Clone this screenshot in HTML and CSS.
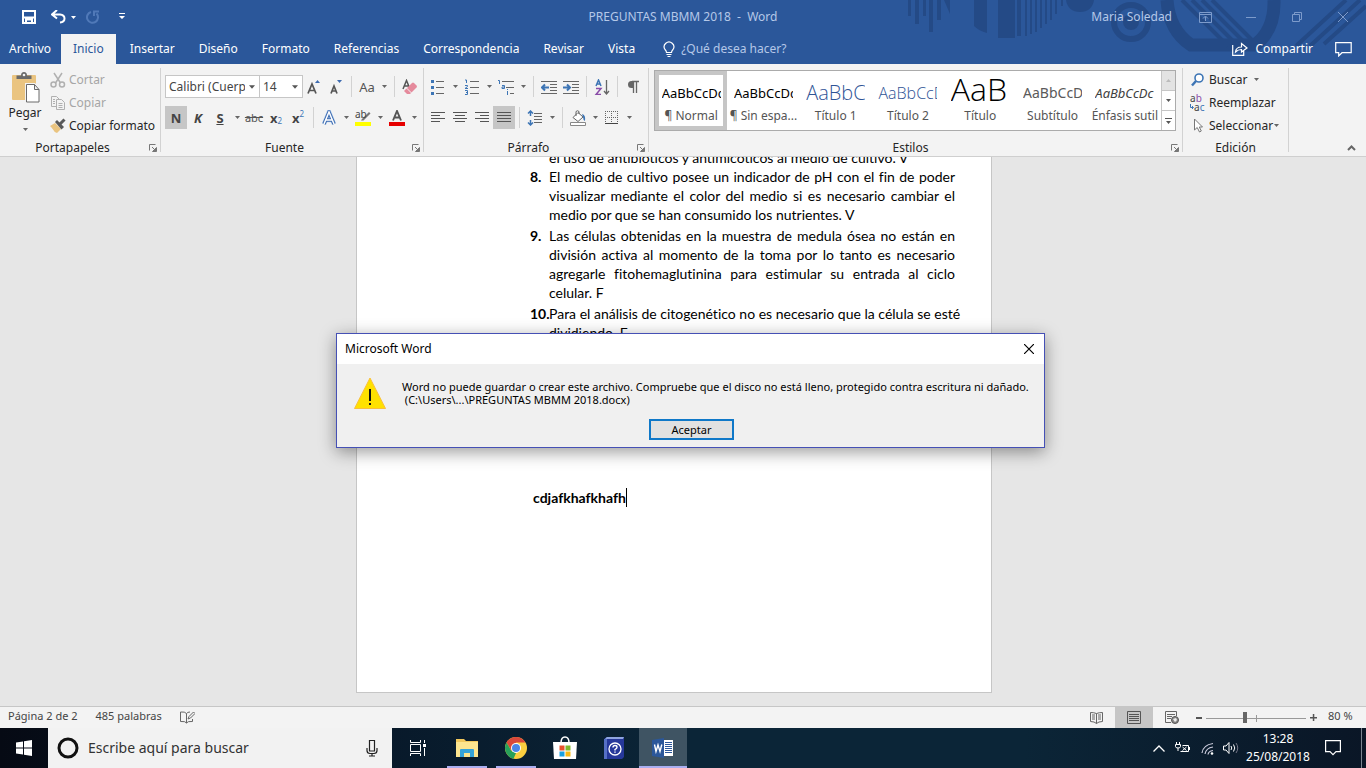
FILE: index.html
```html
<!DOCTYPE html>
<html lang="es">
<head>
<meta charset="utf-8">
<title>PREGUNTAS MBMM 2018 - Word</title>
<link rel="stylesheet" href="styles.css">
</head>
<body>
<svg class="defs" aria-hidden="true">
  <symbol id="down" viewBox="0 0 7 4"><path d="M0 0h7L3.500 4z" fill="currentColor"/></symbol>
  <symbol id="launch" viewBox="0 0 8 8"><path d="M.5 6.500v-6h6M3 3l3 3M7.500 3.500v4h-4z" fill="none" stroke="#777"/><path d="M7.500 3.500v4h-4z" fill="#777"/></symbol>
</svg>

<header class="top">
  <svg class="pattern" viewBox="0 0 460 64" aria-hidden="true">
    <g fill="#244a86">
      <path d="M2 0h3v16H2zM9 0h4v24H9zM17 0h3v16h-3zM23 0h4v32h-4zM31 0h4v20h-4zM38 0h6v14zM68 0h13v33q-8-2-13-7zM92 0h17v38H92z"/>
      <path d="M111 0h4v36h-4zM119 0h2v36h-2zM124 0h2v34h-2zM129 0h2v32h-2zM134 0h2v28h-2zM139 0h2v24h-2zM144 0h2v20h-2zM149 0h2v14h-2zM155 0h2v6h-2z"/>
      <path d="M160 0h28q-2 12-14 12t-14-12z"/>
      <circle cx="225" cy="22" r="8"/>
    </g>
    <g fill="none" stroke="#244a86">
      <circle cx="225" cy="22" r="17" stroke-width="6"/>
      <path d="M261 0q2 30 24 45h64q20-15 19-45" stroke-width="13"/>
      <path d="M276 0l46 46M286 0l46 46M296 0l46 46M306 0l46 46" stroke-width="4"/>
      <path d="M440 0l-50 46M454 0l-50 46M460 6l-42 38" stroke-width="4"/>
    </g>
  </svg>
  <div class="titlebar">
    <div class="quick">
      <button class="qb save" aria-label="Guardar"><svg width="14" height="14" viewBox="0 0 14 14"><path d="M1 1h12v12H1zM1 7.500h12M4 13V9.500h6V13" fill="none" stroke="#fff" stroke-width="2"/></svg></button>
      <button class="qb undo" aria-label="Deshacer"><svg width="15" height="14" viewBox="0 0 15 14"><path d="M6 0L1 4.500l5 4M2 4.500h7q4.500.5 4.500 4T9 12.500" fill="none" stroke="#fff" stroke-width="2"/></svg></button>
      <button class="qb tiny" aria-label="Opciones de deshacer"><svg width="5" height="3"><use href="#down"/></svg></button>
      <button class="qb redo" aria-label="Rehacer"><svg width="14" height="14" viewBox="0 0 14 14"><path d="M5 2a5.500 5.500 0 1 0 5.500 1.500M8 6V1.500h5" fill="none" stroke="#5079b8" stroke-width="2"/></svg></button>
      <button class="qb more" aria-label="Personalizar"><svg width="6" height="8" viewBox="0 0 6 8"><path d="M0 0h6v1H0zM0 3h6L3 6z" fill="#fff"/></svg></button>
    </div>
    <div class="doc-title">PREGUNTAS MBMM 2018&nbsp; -&nbsp; Word</div>
    <div class="window">
      <span class="user">Maria Soledad</span>
      <button aria-label="Opciones de cinta"><svg width="13" height="11" viewBox="0 0 13 11"><path d="M.5.5h12v10H.5zM.5 2.500h12M6.500 9V4.500M4 6.500l2.500-2.500L9 6.500" fill="none" stroke="#7d9bcb"/></svg></button>
      <button aria-label="Minimizar"><svg width="10" height="10" viewBox="0 0 10 10"><path d="M0 5.500h10" stroke="#7d9bcb"/></svg></button>
      <button aria-label="Restaurar"><svg width="10" height="10" viewBox="0 0 10 10"><path d="M.5 2.500h7v7h-7zM2.500 2.500v-2h7v7h-2" fill="none" stroke="#7d9bcb"/></svg></button>
      <button aria-label="Cerrar"><svg width="10" height="10" viewBox="0 0 10 10"><path d="M0 0l10 10M10 0L0 10" stroke="#7d9bcb"/></svg></button>
    </div>
  </div>
  <nav class="tabs">
    <button class="tab file">Archivo</button>
    <button class="tab active">Inicio</button>
    <button class="tab first">Insertar</button>
    <button class="tab">Diseño</button>
    <button class="tab">Formato</button>
    <button class="tab">Referencias</button>
    <button class="tab">Correspondencia</button>
    <button class="tab">Revisar</button>
    <button class="tab">Vista</button>
    <label class="tell">
      <svg width="12" height="17" viewBox="0 0 12 17"><path d="M3.500 11.500Q3.500 10 2 8.500A4.800 4.800 0 1 1 10 8.500Q8.500 10 8.500 11.500zM3.500 13.500h5M4.500 15.500h3" fill="none" stroke="#fff" stroke-width="1.200"/></svg>
      <input type="text" placeholder="¿Qué desea hacer?" aria-label="¿Qué desea hacer?">
    </label>
    <button class="share"><svg width="16" height="14" viewBox="0 0 16 14"><path d="M.7 3v10.300h11V9M3.500 10Q4 5 9.500 5V1.500L15 6l-5.500 4V7.500Q6 7.500 3.500 10z" fill="none" stroke="#fff" stroke-width="1.200"/></svg>Compartir</button>
    <button class="comment" aria-label="Comentarios"><svg width="17" height="15" viewBox="0 0 17 15"><path d="M.7.7h15.500v10H7l-3.300 3.200v-3.200h-3z" fill="none" stroke="#fff" stroke-width="1.200"/></svg></button>
  </nav>
</header>

<section class="ribbon">
  <div class="group clipboard">
    <div class="body">
      <button class="paste">
        <svg width="29" height="31" viewBox="0 0 29 31"><path d="M1 4q0-1 1-1h22q1 0 1 1v24H2q-1 0-1-1z" fill="#eac480"/><path d="M5.500 7V3.500H10Q10 0 13 0t3 3.500h4.500V7z" fill="#6a6a6a"/><circle cx="13" cy="3" r="1.300" fill="#f3f3f3"/><path d="M14 11h10l5 5v15H14z" fill="#f3f3f3"/><path d="M15.500 12.500h8l4.500 5V30H15.500zM23.500 12.500v5H28" fill="#fff" stroke="#6a6a6a"/></svg>
        <span>Pegar</span>
        <svg class="dn" width="5" height="3"><use href="#down"/></svg>
      </button>
      <div class="stack">
        <button class="line off"><svg width="16" height="16" viewBox="0 0 16 16"><g fill="none" stroke="#b0b0b0" stroke-width="1.500"><path d="M4 1l6.500 10M12 1L5.500 11"/><circle cx="3.500" cy="12.500" r="2.500"/><circle cx="12" cy="12.500" r="2.500"/></g></svg>Cortar</button>
        <button class="line off"><svg width="16" height="16" viewBox="0 0 16 16"><path d="M6 11.500H1.500v-10h5L9 4M3 4.500h2M3 6.500h2M3 8.500h2M6.500 4.500h5l3 3v7h-8zM8.500 8.500h4M8.500 10.500h4M8.500 12.500h4" fill="none" stroke="#b0b0b0"/></svg>Copiar</button>
        <button class="line"><svg width="16" height="16" viewBox="0 0 16 16"><path d="M0 8l5-3 6 6-4 4q-3-1-4-3.500Q1.500 9 0 8z" fill="#eac480"/><path d="M5 4l2-2 7 7-2.500 2.500z" fill="#595959"/><path d="M10 6l4.500-4.500" stroke="#595959" stroke-width="3"/></svg>Copiar formato</button>
      </div>
    </div>
    <div class="caption"><span>Portapapeles</span><button aria-label="Más de Portapapeles"><svg width="8" height="8"><use href="#launch"/></svg></button></div>
  </div>

  <div class="group font">
    <div class="rows">
      <div class="row">
        <label class="combo face"><select aria-label="Fuente"><option>Calibri (Cuerpo)</option></select><svg width="6" height="4"><use href="#down"/></svg></label>
        <label class="combo size"><select aria-label="Tamaño"><option>14</option></select><svg width="6" height="4"><use href="#down"/></svg></label>
        <button class="tb" aria-label="Aumentar fuente"><svg width="16" height="16" viewBox="0 0 16 16"><path d="M2 14.500L6 5l4 9.500M3.500 11.500h5" fill="none" stroke="#555" stroke-width="1.700"/><path d="M9 4h5l-2.500-3z" fill="#3d6bb0"/></svg></button>
        <button class="tb" aria-label="Disminuir fuente"><svg width="16" height="16" viewBox="0 0 16 16"><path d="M3 14.500L6 7l3 7.500M4 12h4" fill="none" stroke="#555" stroke-width="1.700"/><path d="M9 1h5l-2.500 3z" fill="#3d6bb0"/></svg></button>
        <i class="sep"></i>
        <button class="tb gray">Aa</button><button class="arr" aria-label="Opciones de mayúsculas"><svg width="5" height="3"><use href="#down"/></svg></button>
        <i class="sep"></i>
        <button class="tb" aria-label="Borrar formato"><svg width="16" height="16" viewBox="0 0 16 16"><path d="M1 10L4.500 1.500 8 10M2.500 7H7" fill="none" stroke="#555" stroke-width="1.500"/><path d="M2 12l8-8q1-1 2 0l2.500 2.500q1 1 0 2L8 15H5z" fill="#e58a9c"/><path d="M4.500 9l5 5" stroke="#f3f3f3"/></svg></button>
      </div>
      <div class="row">
        <button class="tb on gray"><b>N</b></button>
        <button class="tb gray"><b><em>K</em></b></button>
        <button class="tb gray"><b><u>S</u></b></button><button class="arr" aria-label="Opciones de subrayado"><svg width="5" height="3"><use href="#down"/></svg></button>
        <button class="tb gray small"><s>abc</s></button>
        <button class="tb gray"><b>x</b><sub>2</sub></button>
        <button class="tb gray"><b>x</b><sup>2</sup></button>
        <i class="sep"></i>
        <button class="tb" aria-label="Efectos de texto"><svg width="16" height="16" viewBox="0 0 16 16"><path d="M3 14L8 2l5 12M5 10h6" fill="none" stroke="#b4cfee" stroke-width="4.500"/><path d="M3 14L8 2l5 12M5 10h6" fill="none" stroke="#3d6bb0" stroke-width="3.400"/><path d="M3 14L8 2l5 12M5 10h6" fill="none" stroke="#fff" stroke-width="1.500"/></svg></button><button class="arr" aria-label="Opciones de efectos"><svg width="5" height="3"><use href="#down"/></svg></button>
        <button class="tb mark" aria-label="Resaltado"><span>ab</span><svg width="16" height="16" viewBox="0 0 16 16"><path d="M7 9l7-7 1.500 1.500-7 7H6z" fill="#777"/><path d="M0 12h16v4H0z" fill="#ff0"/></svg></button><button class="arr" aria-label="Color de resaltado"><svg width="5" height="3"><use href="#down"/></svg></button>
        <button class="tb" aria-label="Color de fuente"><svg width="16" height="16" viewBox="0 0 16 16"><path d="M4 10.500L8 1l4 9.500M5.500 7.500h5" fill="none" stroke="#555" stroke-width="1.900"/><path d="M0 12h16v4H0z" fill="#e60000"/></svg></button><button class="arr" aria-label="Más colores"><svg width="5" height="3"><use href="#down"/></svg></button>
      </div>
    </div>
    <div class="caption"><span>Fuente</span><button aria-label="Más de Fuente"><svg width="8" height="8"><use href="#launch"/></svg></button></div>
  </div>

  <div class="group para">
    <div class="rows">
      <div class="row">
        <button class="tb" aria-label="Viñetas"><svg width="16" height="16" viewBox="0 0 16 16"><path d="M6 2.500h8M6 8.500h8M6 14.500h8" stroke="#666"/><path d="M1 1h3v3H1zM1 7h3v3H1zM1 13h3v3H1z" fill="#3d75b5"/></svg></button><button class="arr" aria-label="Más viñetas"><svg width="5" height="3"><use href="#down"/></svg></button>
        <button class="tb" aria-label="Numeración"><svg width="16" height="16" viewBox="0 0 16 16"><path d="M6 2.500h9M6 8.500h9M6 14.500h9" stroke="#666"/><path d="M1 1h1.500v3M1 6.500h2.500v1L1 9.500h3M1 11.500h2.500v4H1M2 13.500h1.500" fill="none" stroke="#3d75b5"/></svg></button><button class="arr" aria-label="Más numeración"><svg width="5" height="3"><use href="#down"/></svg></button>
        <button class="tb" aria-label="Lista multinivel"><svg width="16" height="16" viewBox="0 0 16 16"><path d="M4 2.500h12M8 8.500h8M12 14.500h4" stroke="#666"/><path d="M0 1.500h1.500V5M4 6.500h2.500v3H4v-1.500h2M9.500 10v1M9.500 12v4" fill="none" stroke="#3d75b5"/></svg></button><button class="arr" aria-label="Más niveles"><svg width="5" height="3"><use href="#down"/></svg></button>
        <i class="sep"></i>
        <button class="tb" aria-label="Disminuir sangría"><svg width="16" height="16" viewBox="0 0 16 16"><path d="M0 2.500h16M9 5.500h7M9 8.500h7M9 11.500h7M0 14.500h16" stroke="#666"/><path d="M8 8.500H1M4 5.500l-3 3 3 3" fill="none" stroke="#3d75b5" stroke-width="2"/></svg></button>
        <button class="tb" aria-label="Aumentar sangría"><svg width="16" height="16" viewBox="0 0 16 16"><path d="M0 2.500h16M9 5.500h7M9 8.500h7M9 11.500h7M0 14.500h16" stroke="#666"/><path d="M0 8.500h7M4 5.500l3 3-3 3" fill="none" stroke="#3d75b5" stroke-width="2"/></svg></button>
        <i class="sep"></i>
        <button class="tb" aria-label="Ordenar"><svg width="16" height="16" viewBox="0 0 16 16"><path d="M2 7l2.500-6L7 7M3 5h3" fill="none" stroke="#3d75b5" stroke-width="1.500"/><path d="M2 9.500h5l-5 6h5" fill="none" stroke="#8a4da8" stroke-width="1.500"/><path d="M12.500 1v14M10 12l2.500 3 2.500-3" fill="none" stroke="#666" stroke-width="1.300"/></svg></button>
        <i class="sep"></i>
        <button class="tb" aria-label="Mostrar todo"><svg width="16" height="16" viewBox="0 0 16 16"><path d="M7 2.500h7M8.500 2v12M11.500 2v12" fill="none" stroke="#666" stroke-width="1.300"/><path d="M8 9H6.500a3.500 3.500 0 0 1 0-7H8z" fill="#666"/></svg></button>
      </div>
      <div class="row">
        <button class="tb" aria-label="Izquierda"><svg width="14" height="12" viewBox="0 0 14 12"><path d="M0 .5h14M0 3.500h9M0 6.500h14M0 9.500h9" stroke="#555"/></svg></button>
        <button class="tb" aria-label="Centrar"><svg width="14" height="12" viewBox="0 0 14 12"><path d="M0 .5h14M2 3.500h10M0 6.500h14M2 9.500h10" stroke="#555"/></svg></button>
        <button class="tb" aria-label="Derecha"><svg width="14" height="12" viewBox="0 0 14 12"><path d="M0 .5h14M5 3.500h9M0 6.500h14M5 9.500h9" stroke="#555"/></svg></button>
        <button class="tb on" aria-label="Justificar"><svg width="14" height="12" viewBox="0 0 14 12"><path d="M0 .5h14M0 3.500h14M0 6.500h14M0 9.500h14" stroke="#555"/></svg></button>
        <i class="sep"></i>
        <button class="tb" aria-label="Interlineado"><svg width="16" height="16" viewBox="0 0 16 16"><path d="M7 3.500h8M7 6.500h8M7 9.500h8M7 12.500h8" stroke="#666"/><path d="M3.500 1v5M1 3.500L3.500 1 6 3.500M3.500 10v5M1 12.500L3.500 15 6 12.500" fill="none" stroke="#3d75b5" stroke-width="1.500"/></svg></button><button class="arr" aria-label="Más interlineado"><svg width="5" height="3"><use href="#down"/></svg></button>
        <i class="sep"></i>
        <button class="tb" aria-label="Sombreado"><svg width="16" height="16" viewBox="0 0 16 16"><path d="M3 7.500L8 2.500l5 4.500-5 4.500zM6 6V1.500q1.500-1.500 3 0V4" fill="#fff" stroke="#666"/><path d="M12 4q4 1 3 7-2-1-2-4z" fill="#3d75b5"/><path d="M.5 12.500h15v3H.5z" fill="#fff" stroke="#888"/></svg></button><button class="arr" aria-label="Más sombreado"><svg width="5" height="3"><use href="#down"/></svg></button>
        <button class="tb" aria-label="Bordes"><svg width="14" height="14" viewBox="0 0 14 14"><path d="M.5 0v13M6.500 0v13M12.500 0v13M0 .5h13M0 6.500h13" stroke="#666" stroke-dasharray="1 1"/><path d="M0 12.500h13" stroke="#444"/></svg></button><button class="arr" aria-label="Más bordes"><svg width="5" height="3"><use href="#down"/></svg></button>
      </div>
    </div>
    <div class="caption"><span>Párrafo</span><button aria-label="Más de Párrafo"><svg width="8" height="8"><use href="#launch"/></svg></button></div>
  </div>

  <div class="group styles">
    <div class="gallery">
      <button class="style chosen"><span class="pv">AaBbCcDc</span><span class="nm">¶ Normal</span></button>
      <button class="style"><span class="pv">AaBbCcDc</span><span class="nm">¶ Sin espa...</span></button>
      <button class="style"><span class="pv h1">AaBbCc</span><span class="nm">Título 1</span></button>
      <button class="style"><span class="pv h2">AaBbCcD</span><span class="nm">Título 2</span></button>
      <button class="style"><span class="pv h0">AaB</span><span class="nm">Título</span></button>
      <button class="style"><span class="pv sub">AaBbCcD</span><span class="nm">Subtítulo</span></button>
      <button class="style"><span class="pv em">AaBbCcDc</span><span class="nm">Énfasis sutil</span></button>
      <div class="scroll">
        <button class="dim" aria-label="Fila anterior"><svg class="up" width="5" height="3"><use href="#down"/></svg></button>
        <button aria-label="Fila siguiente"><svg width="5" height="3"><use href="#down"/></svg></button>
        <button aria-label="Más estilos"><svg width="7" height="6" viewBox="0 0 7 6"><path d="M0 0h7v1H0zM1 3h5L3.500 6z" fill="#555"/></svg></button>
      </div>
    </div>
    <div class="caption"><span>Estilos</span><button aria-label="Más de Estilos"><svg width="8" height="8"><use href="#launch"/></svg></button></div>
  </div>

  <div class="group edit">
    <div class="stack">
      <button class="line"><svg width="16" height="16" viewBox="0 0 16 16"><circle cx="9" cy="6" r="4" fill="#fff" stroke="#3d75b5" stroke-width="1.600"/><path d="M6 9l-4 4.500" stroke="#3d75b5" stroke-width="2.500"/></svg>Buscar<svg class="dn wide" width="5" height="3"><use href="#down"/></svg></button>
      <button class="line"><span class="swap"><span>a<i>b</i></span><span class="to"><svg width="4" height="6" viewBox="0 0 4 6"><path d="M.5 0v3.500H3M2 2l1.500 1.500L2 5" fill="none" stroke="#3d75b5"/></svg><b>a</b>c</span></span>Reemplazar</button>
      <button class="line"><svg width="16" height="16" viewBox="0 0 16 16"><path d="M4.500 1v11l2.700-2.500L9.500 14l1.800-1-2-4h3.200z" fill="#fff" stroke="#777"/></svg>Seleccionar<svg class="dn" width="5" height="3"><use href="#down"/></svg></button>
    </div>
    <div class="caption"><span>Edición</span></div>
  </div>
  <div class="collapse"><button aria-label="Contraer cinta"><svg width="9" height="6" viewBox="0 0 9 6"><path d="M1 5l3.500-3.500L8 5" fill="none" stroke="#666" stroke-width="2"/></svg></button></div>
</section>

<main class="desk">
  <article class="page">
    <div class="item"><b></b><p><span class="last">el uso de antibióticos y antimicóticos al medio de cultivo. V</span></p></div>
    <div class="item"><b>8.</b><p><span>El medio de cultivo posee un indicador de pH con el fin de poder</span><span>visualizar mediante el color del medio si es necesario cambiar el</span><span class="last">medio por que se han consumido los nutrientes. V</span></p></div>
    <div class="item"><b>9.</b><p><span>Las células obtenidas en la muestra de medula ósea no están en</span><span>división activa al momento de la toma por lo tanto es necesario</span><span>agregarle fitohemaglutinina para estimular su entrada al ciclo</span><span class="last">celular. F</span></p></div>
    <div class="item"><b>10.</b><p><span>Para el análisis de citogenético no es necesario que la célula se esté</span><span class="last">dividiendo. F</span></p></div>
    <p class="typed">cdjafkhafkhafh</p>
  </article>
  <div class="dialog" role="dialog" aria-labelledby="dlg">
    <div class="dlg-head"><span id="dlg">Microsoft Word</span><button aria-label="Cerrar mensaje"><svg width="10" height="10" viewBox="0 0 10 10"><path d="M0 0l10 10M10 0L0 10" stroke="#000" stroke-width="1.200"/></svg></button></div>
    <div class="dlg-body">
      <svg width="32" height="32" viewBox="0 0 32 32"><path d="M16 1L31.500 31.500H.5z" fill="#ffe100" stroke="#f9bf3b"/><path d="M15 12h2v12h-2zM15 26h2v2h-2z" fill="#111"/></svg>
      <p>Word no puede guardar o crear este archivo. Compruebe que el disco no está lleno, protegido contra escritura ni dañado.<br>&nbsp;(C:\Users\...\PREGUNTAS MBMM 2018.docx)</p>
    </div>
    <button class="ok">Aceptar</button>
  </div>
</main>

<footer class="status">
  <span class="pg">Página 2 de 2</span><span class="wc">485 palabras</span>
  <button aria-label="Revisión"><svg width="15" height="13" viewBox="0 0 15 13"><path d="M6.500 12V2.500Q5 .5 .5 1v9.500q5-.5 6 1.500 1-2 6-1.500V8M6.500 2.500Q7.500 1 10 1M8 8l1-2.500L13.500 1 15 2.500 10.500 7z" fill="none" stroke="#666"/></svg></button>
  <div class="views">
    <button aria-label="Modo lectura"><svg width="13" height="12" viewBox="0 0 13 12"><path d="M6.500 11.500V1.500Q4 .5.500.5v9q4 0 6 2 2-2 6-2v-9q-3.500 0-6 1M2 3h3M2 5h3M2 7h3M8 3h3M8 5h3M8 7h3" fill="none" stroke="#666"/></svg></button>
    <button class="on" aria-label="Diseño de impresión"><svg width="14" height="13" viewBox="0 0 14 13"><path d="M.5.5h13v12H.5zM2 3.500h10M2 5.500h10M2 7.500h10M2 9.500h10" fill="none" stroke="#555"/></svg></button>
    <button aria-label="Diseño web"><svg width="14" height="13" viewBox="0 0 14 13"><path d="M6 11.500H.5V.5h11V5M2 3.500h8M2 5.500h5M2 7.500h4" fill="none" stroke="#666"/><circle cx="10" cy="9" r="3.500" fill="#888" stroke="#555"/><path d="M8 8l3-1 1 2-2 2z" fill="#eee"/></svg></button>
  </div>
  <div class="zoom"><button aria-label="Alejar"><svg width="6" height="2"><path d="M0 0h6v2H0z" fill="#555"/></svg></button><input type="range" min="0" max="100" value="39" aria-label="Zoom"><button aria-label="Acercar"><svg width="7" height="7"><path d="M0 3h7v1.500H0zM2.800 0h1.500v7H2.800z" fill="#555"/></svg></button><span>80 %</span></div>
</footer>

<div class="taskbar">
  <button class="start" aria-label="Inicio de Windows"><svg width="16" height="16" viewBox="0 0 16 16"><path d="M0 2.500l7-1v6H0zM8 1.300L16 0v7.500H8zM0 8.500h7v6l-7-1zM8 8.500h8V16l-8-1.200z" fill="#fff"/></svg></button>
  <label class="find">
    <svg width="22" height="22" viewBox="0 0 22 22"><circle cx="11" cy="11" r="9" fill="none" stroke="#111" stroke-width="3"/></svg>
    <input type="text" placeholder="Escribe aquí para buscar" aria-label="Buscar en Windows">
    <svg width="12" height="17" viewBox="0 0 12 17"><path d="M3.500.5h5v10.500h-5zM1 8v2.500q0 3 3 3h4q3 0 3-3V8M6 13.500v3M3 16h6" fill="none" stroke="#222" stroke-width="1.200"/></svg>
  </label>
  <div class="apps">
    <button aria-label="Vista de tareas"><svg width="16" height="16" viewBox="0 0 16 16"><path d="M.5 0v2.500h10V0M.5 4.500h10v7H.5zM.5 16v-2.500h10V16M14.500 0v3M14.500 8v8" fill="none" stroke="#fff"/><path d="M13 4h3v3h-3z" fill="#fff"/></svg></button>
    <button class="run" aria-label="Explorador"><svg width="22" height="20" viewBox="0 0 22 20"><path d="M0 1h8l2 2h12v16H0z" fill="#f2c85c"/><path d="M1 4h21v15H0V4z" fill="#fde58f"/><path d="M4 19v-7q0-1 1-1h12q1 0 1 1v7h-4v-4H8v4z" fill="#35a3d8"/></svg></button>
    <button class="run" aria-label="Chrome"><svg width="22" height="22" viewBox="0 0 22 22"><circle cx="11" cy="11" r="11" fill="#fbcf3f"/><path d="M1.500 5.500A11 11 0 0 1 20.500 5.500H11L6.500 14z" fill="#d9483b"/><path d="M1.500 5.500L6.200 13.700 11 16l-2.500 5.700A11 11 0 0 1 1.500 5.500z" fill="#27a05a"/><circle cx="11" cy="11" r="5" fill="#fff"/><circle cx="11" cy="11" r="4" fill="#4a86e8"/></svg></button>
    <button aria-label="Tienda"><svg width="24" height="24" viewBox="0 0 24 24"><path d="M8 7Q8 1 12 1t4 6" fill="none" stroke="#fff" stroke-width="1.500"/><path d="M0 6h24l-1 17H1z" fill="#fff"/><path d="M6.500 9.500h5v5h-5z" fill="#e8512b"/><path d="M12.500 9.500h5v5h-5z" fill="#80b82a"/><path d="M6.500 15.500h5v5h-5z" fill="#1ba0df"/><path d="M12.500 15.500h5v5h-5z" fill="#f9b812"/></svg></button>
    <button aria-label="Ayuda"><svg width="20" height="22" viewBox="0 0 20 22"><path d="M0 2l3-2h17v20l-2 2H0z" fill="#26389a"/><path d="M1 1.500L3 0h17l-1 2H2z" fill="#8fa5e0"/><path d="M0 2h3v20H0z" fill="#5670c4"/><circle cx="11" cy="12" r="6" fill="none" stroke="#fff" stroke-width="1.300"/><path d="M9 10.500q0-2 2-2t2 1.700q0 1-2 2.300v1M11 14.500v1.300" fill="none" stroke="#fff" stroke-width="1.400"/></svg></button>
    <button class="run current" aria-label="Word"><svg width="22" height="20" viewBox="0 0 22 20"><path d="M11 2h10v16H11z" fill="#fff"/><path d="M13 4.500h7M13 6.500h7M13 8.500h7M13 10.500h7M13 12.500h7M13 14.500h7" stroke="#2b579a"/><path d="M0 2l12-2v20L0 18z" fill="#2b579a"/><path d="M2.500 6.500L4 13.500l2-6.500 2 6.500 1.800-7" fill="none" stroke="#fff" stroke-width="1.400"/></svg></button>
  </div>
  <div class="tray">
    <button aria-label="Iconos ocultos"><svg width="12" height="7" viewBox="0 0 12 7"><path d="M.5 6.500L6 1l5.500 5.500" fill="none" stroke="#fff" stroke-width="1.300"/></svg></button>
    <button aria-label="Batería"><svg width="16" height="12" viewBox="0 0 16 12"><path d="M1.500 0v2.500M4.500 0v2.500M.5 2.500h5v2Q5.500 6 3 6T.5 4.500zM3 6v3M5.500 9.500h8v-6h-6M14.500 5v3M7.500 5l4 3.500M11.500 5l-4 3.500" fill="none" stroke="#fff"/></svg></button>
    <button aria-label="Red"><svg width="13" height="13" viewBox="0 0 13 13"><path d="M1 11Q2 3 12 1.500M4 12q1-6 8-7M7 12.500q.5-3.500 5-4" fill="none" stroke="#ccd" stroke-width="1.200"/><circle cx="11" cy="11.500" r="1.300" fill="#fff"/></svg></button>
    <button aria-label="Volumen"><svg width="16" height="12" viewBox="0 0 16 12"><path d="M.5 4v4H3l3 3.500V.5L3 4zM8 4q1.500 2 0 4M10.500 2.500q2.500 3.500 0 7" fill="none" stroke="#fff"/><path d="M13 1q3.500 5 0 10" fill="none" stroke="#778"/></svg></button>
    <div class="clock"><span>13:28</span><span>25/08/2018</span></div>
    <button aria-label="Notificaciones"><svg width="16" height="16" viewBox="0 0 16 16"><path d="M.6.6h14.800v11h-4.400L8 14.600l-3-3H.6z" fill="none" stroke="#fff" stroke-width="1.200"/></svg></button>
    <button class="peek" aria-label="Mostrar escritorio"></button>
  </div>
</div>
</body>
</html>
```
FILE: styles.css
```css
* { box-sizing: border-box; }
body {
  margin: 0;
  height: 100vh;
  display: flex;
  flex-direction: column;
  overflow: hidden;
  font: 12px/16px "Noto Sans", "Open Sans", sans-serif;
  color: #262626;
  background: #e6e6e6;
}
button, input, select { font: inherit; color: inherit; border: 0; padding: 0; margin: 0; background: none; }
button { display: flex; align-items: center; justify-content: center; white-space: nowrap; }
svg { display: block; flex: none; }
p { margin: 0; }
.defs { position: absolute; width: 0; height: 0; }

.top { position: relative; background: #2b579a; color: #fff; }
.pattern { position: absolute; right: 0; top: 0; width: 460px; height: 64px; }
.titlebar { position: relative; display: grid; grid-template-columns: 1fr auto 1fr; align-items: center; height: 34px; }
.quick { display: flex; align-items: center; padding-left: 22px; }
.qb { height: 20px; }
.undo { margin-left: 15px; }
.tiny { margin-left: 5px; }
.redo { margin-left: 10px; }
.more { margin-left: 19px; }
.doc-title, .user { color: #b5c8e8; }
.window { display: flex; justify-content: flex-end; align-items: center; height: 32px; }
.window button { width: 46px; height: 30px; }
.user { padding-right: 10px; }
.tabs { position: relative; display: flex; height: 30px; align-items: stretch; }
.tab { padding: 0 12px; }
.file { padding: 0 10px 0 9px; }
.first { margin-left: 2px; }
.active { background: #f3f3f3; color: #2b579a; }
.tell { display: flex; align-items: center; gap: 6px; flex: 1; padding-left: 16px; }
.tell input { width: 140px; }
.tell input::placeholder { color: #b5c8e8; opacity: 1; }
.share { gap: 7px; }
.comment { padding: 0 14px 0 22px; }

.ribbon { display: flex; height: 93px; padding-top: 4px; background: #f3f3f3; border-bottom: 1px solid #cfcfcf; }
.group { display: flex; flex: none; flex-direction: column; justify-content: space-between; background: linear-gradient(#d2d2d2, #d2d2d2) 100% 0 / 1px 84px no-repeat; }
.caption { display: flex; align-items: center; height: 16px; }
.caption span { flex: 1; text-align: center; padding: 0 3px 0 3px; }
.caption button { width: 16px; height: 16px; }
.body { display: flex; }
.clipboard { width: 161px; }
.paste { flex-direction: column; width: 50px; height: 68px; justify-content: flex-start; padding-top: 4px; }
.paste span { line-height: 20px; }
.dn { color: #666; margin-top: 5px; }
.line .dn { margin: 0 0 0 -2px; }
.line .wide { margin-left: 4px; }
.stack { display: flex; flex-direction: column; }
.line { height: 23px; gap: 3px; justify-content: flex-start; }
.off { color: #a6a6a6; }
.font { width: 263px; }
.rows { display: flex; flex-direction: column; gap: 8px; padding: 7px 0 0 4px; }
.row { display: flex; height: 23px; align-items: center; }
.para { width: 225px; }
.para .rows { padding-left: 3px; }
.combo { position: relative; display: flex; align-items: center; height: 23px; border: 1px solid #c6c6c6; background: #fff; }
.combo svg { position: absolute; right: 4px; color: #555; }
.combo select { appearance: none; width: 100%; padding-left: 3px; padding-right: 14px; color: #444; overflow: hidden; }
.face { width: 95px; }
.size { width: 44px; margin-left: -1px; }
.tb { width: 22px; height: 23px; }
.on { background: #c6c6c6; }
.gray { color: #555; font-size: 13px; }
.gray b { color: #444; }
.small { font-size: 11px; }
.tb sub, .tb sup { font-size: 8px; line-height: 8px; color: #3d75b5; }
.tb sub { align-self: flex-end; padding-bottom: 4px; }
.tb sup { align-self: flex-start; padding-top: 4px; }
.mark { position: relative; }
.mark span { position: absolute; left: 3px; top: 2px; font-size: 10px; line-height: 12px; color: #444; }
.arr { width: 12px; height: 23px; color: #666; }
.sep { width: 1px; height: 21px; margin: 0 4px; background: #d2d2d2; }
.group.styles { flex: 1; min-width: 0; padding-left: 5px; }
.gallery { display: flex; height: 61px; margin: 2px 7px 0 0; border: 1px solid #ababab; background: #fff; }
.style { flex: 1 1 0; min-width: 0; flex-direction: column; padding: 2px 0; border: 4px solid transparent; }
.chosen { border-color: #c6c6c6; }
.pv { width: 59px; height: 32px; line-height: 32px; overflow: hidden; color: #000; text-align: left; font-size: 13px; }
.nm { color: #555; line-height: 16px; }
.h1 { font-size: 20px; font-weight: 300; font-family: "Open Sans", sans-serif; color: #2f5496; }
.h2 { font-size: 16px; font-weight: 300; font-family: "Open Sans", sans-serif; color: #2f5496; }
.h0 { font-size: 32px; line-height: 24px; font-weight: 300; font-family: "Open Sans", sans-serif; }
.sub { color: #5a5a5a; font-size: 14px; }
.em { color: #404040; font-style: italic; }
.scroll { width: 14px; display: flex; flex-direction: column; border-left: 1px solid #c6c6c6; color: #555; }
.scroll button { flex: 1; border-bottom: 1px solid #c6c6c6; }
.scroll button:last-child { border-bottom: 0; }
.scroll .dim { background: #e3e3e3; color: #bbb; }
.up { transform: rotate(180deg); }
.edit { width: 106px; padding-left: 7px; }
.edit .caption span { padding: 0 8px 0 0; }
.swap { width: 16px; font: 10px/8px "Noto Sans", sans-serif; color: #444; display: flex; flex-direction: column; gap: 1px; }
.swap span { display: flex; align-items: center; }
.swap i { font-style: normal; color: #8a4da8; }
.swap b { font-weight: normal; color: #444; }
.swap .to { color: #3d75b5; }
.collapse { flex: none; width: 77px; display: flex; align-items: flex-end; justify-content: flex-end; padding: 0 10px 5px 0; }

.desk { position: relative; flex: 1; min-height: 0; display: flex; justify-content: center; padding: 0 18px 13px 0; overflow: hidden; }
.page { width: 636px; background: #fff; border: 1px solid #c6c6c6; border-top: 0; padding: 0 36px 0 173px; font: 14px/19px Lato, "Noto Sans", sans-serif; font-variant-ligatures: none; color: #000; overflow: hidden; }
.item { display: grid; grid-template-columns: 19px 1fr; margin-bottom: 2px; white-space: nowrap; }
.item:first-child { margin-top: -9px; margin-bottom: 0; }
.item span { display: block; text-align-last: justify; }
.item .last { text-align-last: left; }
.typed { display: inline-block; margin: 144px 0 0 3px; font-weight: bold; border-right: 1px solid #000; }
.dialog { position: absolute; left: 336px; top: 176px; width: 709px; height: 115px; display: flex; flex-direction: column; background: #f0f0f0; border: 1px solid #4550b5; box-shadow: 0 4px 16px rgba(0, 0, 0, .4); color: #000; }
.dlg-head { display: flex; justify-content: space-between; align-items: center; height: 30px; padding: 0 10px 0 8px; background: #fff; }
.dlg-body { display: flex; gap: 16px; padding: 13px 0 0 17px; }
.dlg-body p { padding-top: 3px; font-size: 11px; line-height: 13px; white-space: nowrap; }
.ok { width: 85px; height: 21px; margin: 10px 0 0 312px; border: 2px solid #0f78c8; background: #e1e1e1; font-size: 11px; }

.status { display: flex; align-items: center; height: 22px; background: #f3f3f3; border-top: 1px solid #c6c6c6; font-size: 11px; color: #444; }
.status span { padding-bottom: 3px; }
.pg { padding-left: 8px; }
.wc { padding: 0 18px; }
.views { display: flex; height: 100%; margin-left: auto; }
.views button { width: 38px; }
.zoom { display: flex; align-items: center; width: 175px; padding-left: 5px; gap: 4px; white-space: nowrap; }
.zoom span { padding-left: 7px; }
.zoom input { appearance: none; width: 100px; height: 12px; background: linear-gradient(#999, #999) 0 6px / 100% 1px no-repeat, linear-gradient(#999, #999) 50% 3px / 1px 7px no-repeat; }
.zoom input::-webkit-slider-thumb { appearance: none; width: 4px; height: 11px; background: #666; }

.taskbar { display: flex; height: 40px; background: linear-gradient(90deg, #060a14, #08192a 28%, #0b2537 50%, #0b2537 75%, #0a1626); color: #fff; }
.start { width: 48px; }
.find { display: flex; align-items: center; width: 344px; padding: 0 14px 0 9px; background: #f2f2f2; color: #333; }
.find input { flex: 1; min-width: 0; margin-left: 9px; font-size: 14px; }
.find input::placeholder { color: #333; opacity: 1; }
.apps { display: flex; gap: 1px; padding-left: 2px; flex: 1; }
.apps button { width: 48px; }
.run { background: linear-gradient(#a9aef0, #a9aef0) 50% 100% / 40px 2px no-repeat; }
.current { background: linear-gradient(#a9aef0, #a9aef0) 50% 100% / 48px 2px no-repeat, #3f5463; }
.tray { display: flex; align-items: center; }
.tray button { width: 24px; height: 40px; }
.clock { display: flex; flex-direction: column; align-items: center; width: 70px; line-height: 18px; }
.tray .clock + button { width: 40px; }
.tray .peek { width: 5px; margin-left: 8px; border-left: 1px solid #7a8590; }
```
